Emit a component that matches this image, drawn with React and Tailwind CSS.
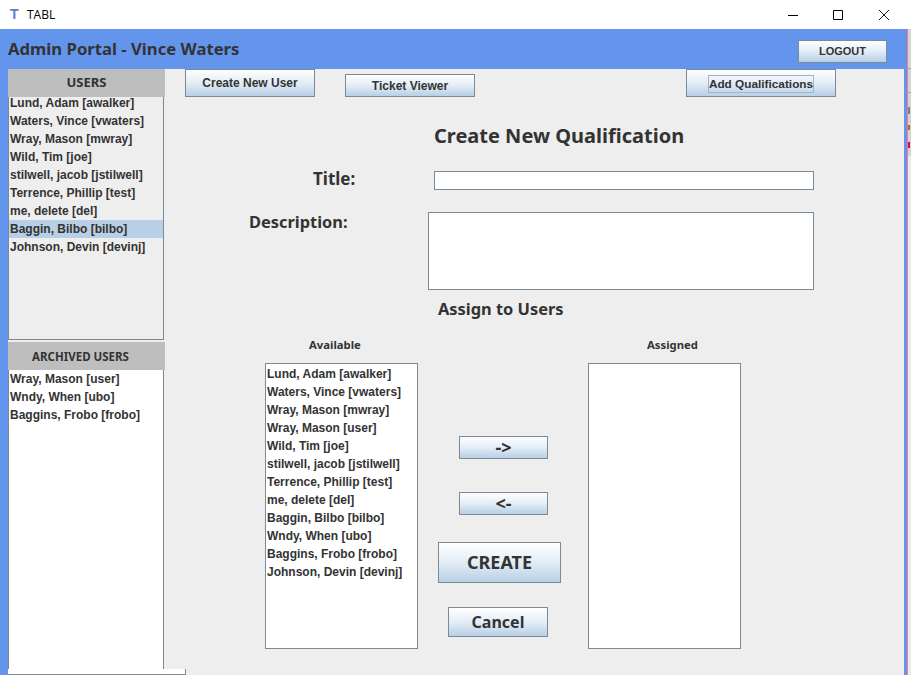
const users = [
  "Lund, Adam [awalker]",
  "Waters, Vince [vwaters]",
  "Wray, Mason [mwray]",
  "Wild, Tim [joe]",
  "stilwell, jacob [jstilwell]",
  "Terrence, Phillip [test]",
  "me, delete [del]",
  "Baggin, Bilbo [bilbo]",
  "Johnson, Devin [devinj]",
];

const archived = ["Wray, Mason [user]", "Wndy, When [ubo]", "Baggins, Frobo [frobo]"];

const available = [
  "Lund, Adam [awalker]",
  "Waters, Vince [vwaters]",
  "Wray, Mason [mwray]",
  "Wray, Mason [user]",
  "Wild, Tim [joe]",
  "stilwell, jacob [jstilwell]",
  "Terrence, Phillip [test]",
  "me, delete [del]",
  "Baggin, Bilbo [bilbo]",
  "Wndy, When [ubo]",
  "Baggins, Frobo [frobo]",
  "Johnson, Devin [devinj]",
];

const heading = "font-['Noto_Sans',sans-serif] font-bold text-[#333333]";
const metal =
  "flex items-center justify-center border border-[#7a8a99] bg-gradient-to-b from-white via-[#e3edf6] to-[#b8cfe5] text-[#333333] font-bold";

function Row({ children, selected }) {
  return (
    <div className={`h-[18px] pl-[1px] leading-[18px] whitespace-nowrap ${selected ? "bg-[#b8cfe5]" : ""}`}>
      {children}
    </div>
  );
}

function WindowControls() {
  return (
    <div className="ml-auto flex items-center text-black">
      <svg width="10" height="10" viewBox="0 0 10 10" className="mr-[35px]">
        <path d="M0 5.5H10" stroke="currentColor" />
      </svg>
      <svg width="10" height="10" viewBox="0 0 10 10" className="mr-[36px]">
        <path d="M.5 .5H9.5V9.5H.5Z" fill="none" stroke="currentColor" />
      </svg>
      <svg width="10" height="10" viewBox="0 0 10 10" className="mr-[22px]">
        <path d="M0 0L10 10M10 0L0 10" stroke="currentColor" strokeWidth="0.9" />
      </svg>
    </div>
  );
}

function TitleBar() {
  return (
    <div className="flex h-[29px] items-center bg-white">
      <span className="ml-[10px] w-[17px] font-['Liberation_Sans',sans-serif] text-[14px] font-bold text-[#5b7fc7]">T</span>
      <span className="font-['Open_Sans',sans-serif] text-[12px] text-black">TABL</span>
      <WindowControls />
    </div>
  );
}

function Sidebar() {
  return (
    <div className="flex w-[157px] shrink-0 flex-col bg-[#eeeeee] text-[12px] text-[#333333]">
      <div className={`${heading} relative z-10 flex h-[28px] items-center justify-center bg-[#bebebe] text-[13px]`}>USERS</div>
      <div className="h-[243px] w-[156px] border-x border-b border-[#7a8a99] bg-[#eeeeee] font-bold">
        <div className="-mt-[3px]">
          {users.map((u) => (
            <Row key={u} selected={u.startsWith("Baggin, Bilbo")}>{u}</Row>
          ))}
        </div>
      </div>
      <div className={`${heading} mt-[2px] flex h-[28px] items-center justify-center bg-[#bebebe] pr-[12px] pt-[1px] text-[11.5px]`}>
        ARCHIVED USERS
      </div>
      <div className="h-[299px] w-[156px] border-x border-[#7a8a99] bg-white font-bold">
        {archived.map((u) => (
          <Row key={u}>{u}</Row>
        ))}
      </div>
      <div className="relative z-10 h-[6px] w-[178px] border-b border-r border-[#7a8a99] bg-white" />
    </div>
  );
}

function Main() {
  return (
    <div className="min-w-0 flex-1 bg-[#eeeeee] text-[#333333]">
      <div className="flex items-start pl-[20px] text-[12px]">
        <button className={`${metal} h-[28px] w-[130px]`}>Create New User</button>
        <button className={`${metal} ml-[30px] mt-[5px] h-[23px] w-[130px] pt-[1px]`}>Ticket Viewer</button>
        <button className={`${metal} ml-[211px] h-[28px] w-[150px]`}>
          <span className="mt-[1px] border border-[#9fb6cd] text-[11.8px] leading-[16px]">Add Qualifications</span>
        </button>
      </div>

      <h1 className={`${heading} ml-[269px] mt-[24px] h-[30px] text-[20px] leading-[30px]`}>Create New Qualification</h1>

      <div className="mt-[20px] flex h-[19px] items-center">
        <label className={`${heading} ml-[148px] -mt-[3px] w-[121px] text-[17px]`}>Title:</label>
        <div className="h-[19px] w-[380px] border border-[#7a8a99] bg-white" />
      </div>

      <div className="mt-[22px] flex items-start">
        <label className={`${heading} ml-[84px] w-[179px] text-[16.4px] leading-[20px]`}>Description:</label>
        <div className="h-[78px] w-[386px] border border-[#7a8a99] bg-white" />
      </div>

      <div className={`${heading} ml-[273px] mt-[8px] h-[22px] text-[16.4px] leading-[22px]`}>Assign to Users</div>

      <div className="mt-[15px] flex items-start">
        <div className="ml-[100px] w-[153px]">
          <div className={`${heading} h-[20px] pl-[44px] text-[11.3px] leading-[20px]`}>Available</div>
          <div className="mt-[8px] h-[286px] border border-[#7a8a99] bg-white pt-[1px] text-[12px] font-bold">
            {available.map((u) => (
              <Row key={u}>{u}</Row>
            ))}
          </div>
        </div>

        <div className="ml-[20px] flex w-[123px] flex-col pt-[101px] font-['Noto_Sans',sans-serif]">
          <button className={`${metal} ml-[21px] h-[23px] w-[89px] text-[18px]`}>-&gt;</button>
          <button className={`${metal} ml-[21px] mt-[33px] h-[23px] w-[89px] text-[18px]`}>&lt;-</button>
          <button className={`${metal} mt-[27px] h-[41px] w-[123px] text-[18px]`}>CREATE</button>
          <button className={`${metal} ml-[10px] mt-[24px] h-[30px] w-[100px] text-[16px]`}>Cancel</button>
        </div>

        <div className="ml-[27px] w-[153px]">
          <div className={`${heading} h-[20px] pl-[59px] text-[11.3px] leading-[20px]`}>Assigned</div>
          <div className="mt-[8px] h-[286px] border border-[#7a8a99] bg-white" />
        </div>
      </div>
    </div>
  );
}

function EdgeOfNextWindow() {
  return (
    <div className="flex w-[3px] flex-col bg-[#d4d4d4]">
      <div className="mt-[39px] h-px bg-[#a0a0a0]" />
      <div className="mt-[23px] h-px bg-[#a0a0a0]" />
      <div className="mt-[14px] h-[7px] w-[2px] bg-[#808080]" />
      <div className="mt-[11px] h-[5px] w-[2px] bg-[#b5651d]" />
      <div className="mt-[12px] h-[6px] w-[2px] bg-[#e6005c]" />
      <div className="mt-[8px] flex-1 bg-[#ececec]" />
    </div>
  );
}

export default function App() {
  return (
    <div className="flex h-[675px] w-[911px] flex-col overflow-hidden bg-white font-['Liberation_Sans',sans-serif]">
      <TitleBar />
      <div className="flex flex-1">
        <div className="flex w-[907px] flex-col bg-[#6495ed]">
          <div className="flex h-[40px] items-end pb-[6px] pl-[8px]">
            <span className={`${heading} self-center pt-[6px] text-[16.7px]`}>Admin Portal - Vince Waters</span>
            <button className={`${metal} ml-auto mr-[20px] h-[23px] w-[89px] text-[11px]`}>LOGOUT</button>
          </div>
          <div className="flex flex-1 pl-[8px] pr-[3px]">
            <Sidebar />
            <Main />
          </div>
        </div>
        <div className="w-px bg-[#f08080]" />
        <EdgeOfNextWindow />
      </div>
    </div>
  );
}
